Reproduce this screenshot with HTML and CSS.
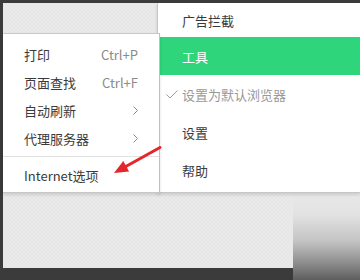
FILE: index.html
```html
<!DOCTYPE html>
<html lang="zh-CN">
<head>
<meta charset="utf-8">
<link rel="stylesheet" href="styles.css">
</head>
<body>
<div class="screen">
  <div class="desk"></div>
  <div class="corner-panel"></div>

  <div class="menu main-menu">
    <div class="item">广告拦截</div>
    <div class="item active">工具</div>
    <div class="item disabled"><svg class="check" width="12" height="9" viewBox="0 0 12 9"><path d="M0.5 4.5 L4 8 L11.5 0.5" fill="none" stroke="#9a9a9a" stroke-width="1"/></svg>设置为默认浏览器</div>
    <div class="item">设置</div>
    <div class="item">帮助</div>
  </div>

  <div class="menu sub-menu">
    <div class="row"><span>打印</span><span class="key">Ctrl+P</span></div>
    <div class="row"><span>页面查找</span><span class="key">Ctrl+F</span></div>
    <div class="row"><span>自动刷新</span><svg class="chev" width="5" height="9" viewBox="0 0 5 9"><path d="M0.5 0.5 L4.5 4.5 L0.5 8.5" fill="none" stroke="#8a8a8a" stroke-width="1"/></svg></div>
    <div class="row"><span>代理服务器</span><svg class="chev" width="5" height="9" viewBox="0 0 5 9"><path d="M0.5 0.5 L4.5 4.5 L0.5 8.5" fill="none" stroke="#8a8a8a" stroke-width="1"/></svg></div>
    <div class="sep"></div>
    <div class="row last"><span>Internet选项</span></div>
  </div>

  <svg class="arrow" width="56" height="40" viewBox="108 140 56 40">
    <line x1="160" y1="147.5" x2="124" y2="167.5" stroke="#e3262a" stroke-width="3" stroke-linecap="round"/>
    <polygon points="114,173 123.3,160.9 129.1,171.4" fill="#e3262a"/>
  </svg>
</div>
</body>
</html>
```

FILE: styles.css
```css
html, body {
  margin: 0;
  padding: 0;
}
body {
  background: #3b3b3b;
  font-family: "Noto Sans CJK SC", "Noto Sans", sans-serif;
  font-size: 13px;
  color: #3a3a3a;
}
.screen {
  position: relative;
  width: 360px;
  height: 280px;
  overflow: hidden;
  background: #3b3b3b;
}
.desk {
  margin: 3px 0 0 3px;
  width: 357px;
  height: 265px;
  background-color: #e8e8e8;
  background-image: repeating-conic-gradient(#e6e6e6 0 25%, #eaeaea 0 50%);
  background-size: 4px 4px;
}
.corner-panel {
  position: absolute;
  left: 293px;
  top: 193px;
  width: 67px;
  height: 87px;
  background: linear-gradient(to bottom, #e8e8e8 0%, #e2e2e2 25%, #c4c4c4 55%, #8e8e8e 80%, #5e5e5e 100%);
}
.menu {
  position: absolute;
  background: #fff;
  box-sizing: border-box;
  border-bottom: 1px solid #c6c6c6;
  box-shadow: 0 2px 3px rgba(0, 0, 0, 0.12);
}
.main-menu {
  left: 157px;
  top: 3px;
  width: 203px;
  height: 190px;
  border-left: 1px solid #c4c4c4;
  display: flex;
  flex-direction: column;
}
.main-menu .item {
  height: 38px;
  display: flex;
  align-items: center;
  padding-left: 24px;
  flex: none;
}
.main-menu .item:first-child {
  height: 34px;
}
.main-menu .item.active {
  background: #2ed57b;
  color: #fff;
}
.main-menu .item.disabled {
  color: #999;
  position: relative;
}
.check {
  position: absolute;
  left: 8px;
  top: 15px;
}
.sub-menu {
  left: 3px;
  top: 33px;
  width: 157px;
  height: 160px;
  border-top: 1px solid #c8c8c8;
  border-right: 1px solid #c0c0c0;
  padding-top: 6px;
  display: flex;
  flex-direction: column;
}
.row {
  height: 28px;
  display: flex;
  align-items: center;
  justify-content: space-between;
  padding: 0 21px 0 21px;
  flex: none;
}
.row .key {
  color: #8a8a8a;
}
.sep {
  height: 1px;
  background: #e2e2e2;
  margin-top: 4px;
  flex: none;
}
.row.last {
  height: 36px;
}
.arrow {
  position: absolute;
  left: 108px;
  top: 140px;
}
```
